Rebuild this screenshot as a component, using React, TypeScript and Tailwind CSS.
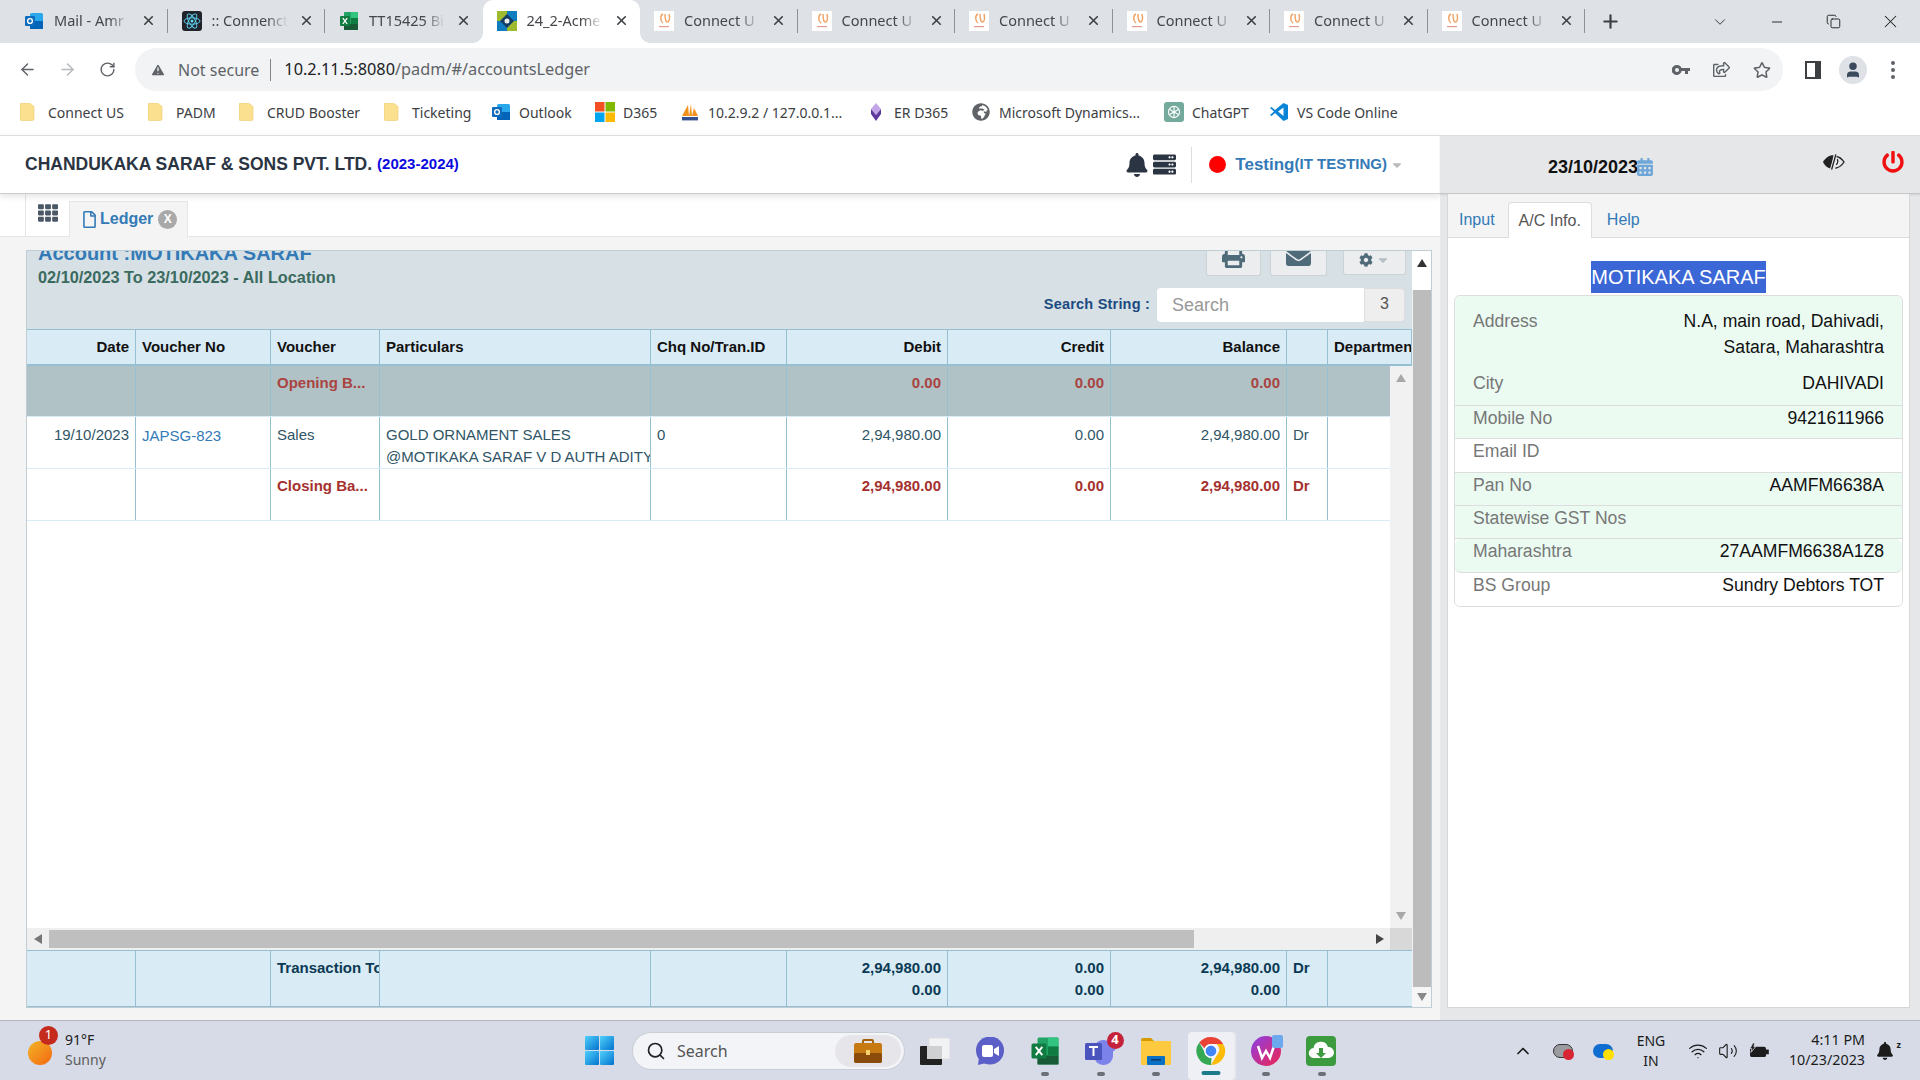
import React from 'react';
import { FaBell, FaServer, FaPrint, FaEnvelope, FaCog, FaRegFile, FaTh, FaCalendarAlt, FaPowerOff, FaCaretDown, FaGlobeAfrica, FaRegShareSquare, FaRegStar } from 'react-icons/fa';
import { ArrowLeft, ArrowRight, RotateCw, X, Plus, Minus, ChevronDown, ChevronUp, Wifi, Volume2, TriangleAlert, Copy, User, Search } from 'lucide-react';

// ===== Favicons =====

const Outlook = () => (
  <svg viewBox="0 0 20 20" className="w-5 h-5">
    <rect x="6" y="2" width="13" height="16" rx="1.5" fill="#28a8ea" />
    <rect x="6" y="10" width="13" height="8" fill="#0364b8" />
    <rect x="1" y="5" width="10" height="10" rx="1" fill="#0f6cbd" />
    <circle cx="6" cy="10" r="2.4" fill="none" stroke="#fff" strokeWidth="1.4" />
  </svg>
);

const ReactLogo = () => (
  <svg viewBox="0 0 20 20" className="w-5 h-5">
    <rect width="20" height="20" rx="3" fill="#20232a" />
    <g fill="none" stroke="#61dafb" strokeWidth="0.9">
      <ellipse cx="10" cy="10" rx="8" ry="3.2" />
      <ellipse cx="10" cy="10" rx="8" ry="3.2" transform="rotate(60 10 10)" />
      <ellipse cx="10" cy="10" rx="8" ry="3.2" transform="rotate(120 10 10)" />
    </g>
    <circle cx="10" cy="10" r="1.5" fill="#61dafb" />
  </svg>
);

const Excel = ({ size = 'w-5 h-5' }: { size?: string }) => (
  <svg viewBox="0 0 20 20" className={size}>
    <rect x="5" y="1" width="14" height="18" rx="1" fill="#21a366" />
    <rect x="12" y="1" width="7" height="6" fill="#33c481" />
    <rect x="5" y="13" width="14" height="6" fill="#185c37" />
    <rect x="12" y="7" width="7" height="6" fill="#107c41" />
    <rect x="1" y="5" width="10" height="10" rx="1" fill="#107c41" />
    <path d="M3.8 7.2l4.4 5.6M8.2 7.2l-4.4 5.6" stroke="#fff" strokeWidth="1.3" />
  </svg>
);

const Acme = () => (
  <svg viewBox="0 0 20 20" className="w-5 h-5">
    <rect width="10" height="10" fill="#9dbb2c" />
    <rect x="10" width="10" height="10" fill="#0d7cc1" />
    <rect y="10" width="10" height="10" fill="#0d7cc1" />
    <rect x="10" y="10" width="10" height="10" fill="#9dbb2c" />
    <path d="M10 3l7 7-7 7-7-7z" fill="#123c66" />
    <circle cx="10" cy="10" r="2.5" fill="#e8eef0" />
  </svg>
);

const ConnectUs = () => (
  <svg viewBox="0 0 20 20" className="w-5 h-5">
    <rect width="20" height="20" fill="#fff" />
    <path d="M9 3C6 4 6 10 9 12M11 3c0 4 .5 8 2.500 8s2.500-4 1.500-8" fill="none" stroke="#f0a060" strokeWidth="1.400" />
    <rect x="5" y="15" width="10" height="1.200" fill="#e59a8e" />
  </svg>
);

const Windows365 = () => (
  <svg viewBox="0 0 20 20" className="w-5 h-5">
    <rect width="9.5" height="9.5" fill="#f25022" />
    <rect x="10.5" width="9.5" height="9.5" fill="#7fba00" />
    <rect y="10.5" width="9.5" height="9.5" fill="#00a4ef" />
    <rect x="10.5" y="10.5" width="9.5" height="9.5" fill="#ffb900" />
  </svg>
);

const Pma = () => (
  <svg viewBox="0 0 20 20" className="w-5 h-5">
    <path d="M2 14L8 3l1 11zM9 14l2-12 1 12zM12 14l2-8 4 8z" fill="#f2921c" />
    <rect x="2" y="15" width="16" height="3.4" fill="#33508f" />
  </svg>
);

const ErD365 = () => (
  <svg viewBox="0 0 20 20" className="w-5 h-5">
    <path d="M10 1l5 6-5 6-5-6z" fill="#c3a6e8" />
    <path d="M5 7l5 6 5-6v5l-5 7-5-7z" fill="#5b3a9b" />
  </svg>
);

const ChatGpt = () => (
  <svg viewBox="0 0 20 20" className="w-5 h-5">
    <rect width="20" height="20" rx="3" fill="#74aa9c" />
    <g fill="none" stroke="#fff" strokeWidth="1.1">
      <circle cx="10" cy="10" r="5.6" />
      <path d="M10 4.4v11M5.2 7.2l9.6 5.6M14.8 7.2l-9.6 5.6" />
    </g>
  </svg>
);

const VsCode = () => (
  <svg viewBox="0 0 20 20" className="w-5 h-5">
    <path d="M14.5 1L19 3v14l-4.500 2L6 11l-3.500 3L1 13l4-3.500L1 6l1.500-1L6 8z" fill="#0a84d6" />
    <path d="M14.500 5.500L9 9.500l5.500 4.500z" fill="#fff" />
  </svg>
);

const Folder = () => (
  <svg viewBox="0 0 15 18" className="w-[15px] h-[18px]">
    <path d="M1.500 0h8L14 3.500V16a1.500 1.500 0 01-1.500 1.500h-11A1.500 1.500 0 010 16V1.500A1.500 1.500 0 011.500 0z" fill="#fbe08f" stroke="#ecc968" strokeWidth="0.600" />
  </svg>
);

const KeyIcon = () => (
  <svg viewBox="0 0 18 12" className="w-[18px] h-[12px]" fill="#5f6368">
    <path d="M5 1a5 5 0 014.600 3H18v3h-2v3h-3V7H9.600A5 5 0 115 1zm0 3a2 2 0 100 4 2 2 0 000-4z" fillRule="evenodd" />
  </svg>
);

const HalfEye = () => (
  <svg viewBox="0 0 24 18" className="w-[23px] h-[18px]">
    <path d="M1 9C4 4 8 2 12 2l-3 14C5.500 15 3 13 1 9z" fill="#222" />
    <path d="M14 3c4 .5 7 3 9 6-2 3-5 6-9 6.500" fill="none" stroke="#222" strokeWidth="1.400" />
    <path d="M16 6c1 2 .5 4-1 6" fill="none" stroke="#222" strokeWidth="1.200" />
    <path d="M15 0L9 18" stroke="#e5e7e9" strokeWidth="2.500" />
    <path d="M14.500 1L10 17" stroke="#222" strokeWidth="1.400" />
  </svg>
);

const Tri = ({ dir, cls }: { dir: 'up' | 'down' | 'left' | 'right'; cls: string }) => {
  const points = { up: '5,1 10,9 0,9', down: '0,1 10,1 5,9', left: '9,0 9,10 1,5', right: '1,0 1,10 9,5' }[dir];
  return (
    <svg viewBox="0 0 10 10" className="w-[10px] h-[10px]">
      <polygon points={points} className={cls} />
    </svg>
  );
};

// ===== Browser chrome =====

const tabs = [
  { icon: <Outlook />, title: 'Mail - Amr', sep: true },
  { icon: <ReactLogo />, title: ':: Connenct', sep: true },
  { icon: <Excel />, title: 'TT15425 Bi', sep: false },
  { icon: <Acme />, title: '24_2-Acme', active: true, sep: false },
  { icon: <ConnectUs />, title: 'Connect U', sep: true },
  { icon: <ConnectUs />, title: 'Connect U', sep: true },
  { icon: <ConnectUs />, title: 'Connect U', sep: true },
  { icon: <ConnectUs />, title: 'Connect U', sep: true },
  { icon: <ConnectUs />, title: 'Connect U', sep: true },
  { icon: <ConnectUs />, title: 'Connect U', sep: true },
];

const TabStrip = () => (
  <div className="h-[43px] bg-[#dee1e6] flex items-end pl-[10px] shrink-0">
    {tabs.map((t, i) => (
      <div key={i} className={`relative w-[157.500px] h-[43px] flex items-center pl-[14px] pb-[2px] ${t.active ? 'bg-white rounded-t-[10px]' : ''}`}>
        {t.active && <span className="absolute bottom-0 -left-[10px] w-[10px] h-[10px] bg-[radial-gradient(circle_at_0_0,transparent_9.500px,white_10px)]" />}
        {t.active && <span className="absolute bottom-0 -right-[10px] w-[10px] h-[10px] bg-[radial-gradient(circle_at_100%_0,transparent_9.500px,white_10px)]" />}
        {t.icon}
        <span className="ml-[10px] w-[76px] overflow-hidden whitespace-nowrap text-[14.500px] text-[#45474a] [mask-image:linear-gradient(to_right,black_72%,transparent)]">{t.title}</span>
        <X size={15} strokeWidth={2.6} className="ml-[11px] text-[#3c4043]" />
        {t.sep && <span className="absolute right-0 top-[9px] h-[24px] w-px bg-[#8e9195]" />}
      </div>
    ))}
    <div className="h-[43px] w-[50px] flex items-center justify-center">
      <Plus size={21} strokeWidth={2.5} className="text-[#3c4043]" />
    </div>
    <div className="flex-1 h-[43px] flex items-center justify-end text-[#222] -mt-[4px]">
      <ChevronDown size={18} strokeWidth={1.2} />
      <Minus size={16} strokeWidth={1.4} className="ml-[40px]" />
      <Copy size={15} strokeWidth={1.5} className="ml-[41px]" />
      <X size={21} strokeWidth={1.2} className="ml-[39px] mr-[19px]" />
    </div>
  </div>
);

const AddressBar = () => (
  <div className="h-[48px] bg-white flex items-start pt-[5px] shrink-0 text-[#5f6368]">
    <div className="w-[135px] h-[43px] flex items-center pl-[18px]">
      <ArrowLeft size={19} strokeWidth={1.8} />
      <ArrowRight size={19} strokeWidth={1.8} className="ml-[21px] text-[#b5b8bc]" />
      <RotateCw size={17} strokeWidth={2} className="ml-[22px]" />
    </div>
    <div className="w-[1648px] h-[43px] rounded-full bg-[#f1f3f4] flex items-center pl-[15px] pr-[12px]">
      <TriangleAlert size={16} fill="#5f6368" stroke="#f1f3f4" />
      <span className="ml-[12px] text-[16px] text-[#5f6368]">Not secure</span>
      <span className="ml-[11px] w-px h-[22px] bg-[#80868b]" />
      <span className="ml-[13px] text-[16.300px] text-[#202124]">
        10.2.11.5:8080<span className="text-[#5f6368]">/padm/#/accountsLedger</span>
      </span>
      <div className="ml-auto flex items-center">
        <KeyIcon />
        <FaRegShareSquare size={17} className="ml-[23px]" />
        <FaRegStar size={18} className="ml-[23px]" />
      </div>
    </div>
    <div className="flex-1 h-[43px] flex items-center">
      <span className="ml-[22px] w-[16px] h-[18px] border-[2px] border-r-[6px] border-[#3c4043]" />
      <span className="ml-[18px] w-[28px] h-[28px] rounded-full bg-[#dee1e6] flex items-center justify-center overflow-hidden">
        <User size={18} fill="#3c4a5e" stroke="#3c4a5e" />
      </span>
      <span className="ml-[24px] flex flex-col gap-[3px]">
        <i className="w-[4px] h-[4px] rounded-full bg-[#5f6368]" />
        <i className="w-[4px] h-[4px] rounded-full bg-[#5f6368]" />
        <i className="w-[4px] h-[4px] rounded-full bg-[#5f6368]" />
      </span>
    </div>
  </div>
);

const bookmarks = [
  { icon: <Folder />, label: 'Connect US', cls: 'w-[128px]' },
  { icon: <Folder />, label: 'PADM', cls: 'w-[91px]' },
  { icon: <Folder />, label: 'CRUD Booster', cls: 'w-[145px]' },
  { icon: <Folder />, label: 'Ticketing', cls: 'w-[107px]' },
  { icon: <Outlook />, label: 'Outlook', cls: 'w-[104px]' },
  { icon: <Windows365 />, label: 'D365', cls: 'w-[85px]' },
  { icon: <Pma />, label: '10.2.9.2 / 127.0.0.1...', cls: 'w-[186px]' },
  { icon: <ErD365 />, label: 'ER D365', cls: 'w-[105px]' },
  { icon: <FaGlobeAfrica size={18} className="text-[#5f6368] ml-[1px]" />, label: 'Microsoft Dynamics...', cls: 'w-[193px]' },
  { icon: <ChatGpt />, label: 'ChatGPT', cls: 'w-[105px]' },
  { icon: <VsCode />, label: 'VS Code Online', cls: 'w-[140px]' },
];

const BookmarksBar = () => (
  <div className="h-[44px] bg-white flex items-center pl-[20px] pb-[2px] shrink-0">
    {bookmarks.map((b) => (
      <div key={b.label} className={`${b.cls} flex items-center shrink-0`}>
        <span className="w-[28px] flex items-center">{b.icon}</span>
        <span className="text-[14px] text-[#3c4043] whitespace-nowrap">{b.label}</span>
      </div>
    ))}
  </div>
);

// ===== Ledger =====

const gridCols = 'grid grid-cols-[109px_135px_109px_271px_136px_161px_163px_176px_41px_84px]';
const cell = 'border-r border-[#96c0d2] px-[6px] overflow-hidden whitespace-nowrap';

type Row = { date?: string; no?: string; voucher?: string; part?: string[]; chq?: string; debit?: string; credit?: string; balance?: string; dr?: string };

const LedgerRow = ({ row, cls, text, pad = 'pt-[6px]', link = 'pt-[7px]' }: { row: Row; cls: string; text: string; pad?: string; link?: string }) => (
  <div className={`${gridCols} ${cls} leading-[22px] text-[15px] ${text}`}>
    <div className={`${cell} text-right ${pad}`}>{row.date}</div>
    <div className={`${cell} ${link} text-[#337ab7]`}>{row.no}</div>
    <div className={`${cell} ${pad}`}>{row.voucher}</div>
    <div className={`${cell} ${pad}`}>
      {row.part?.map((p) => <div key={p}>{p}</div>)}
    </div>
    <div className={`${cell} ${pad}`}>{row.chq}</div>
    <div className={`${cell} text-right ${pad}`}>{row.debit}</div>
    <div className={`${cell} text-right ${pad}`}>{row.credit}</div>
    <div className={`${cell} text-right ${pad}`}>{row.balance}</div>
    <div className={`${cell} ${pad}`}>{row.dr}</div>
    <div className={`${cell} border-r-0`} />
  </div>
);

const Head = ({ children, right }: { children?: React.ReactNode; right?: boolean }) => (
  <div className={`${cell} ${right ? 'text-right' : ''} leading-[34px]`}>{children}</div>
);

const LedgerPanel = () => (
  <div className="h-[758px] w-[1406px] flex border-t border-l border-r border-b border-[#bfcdd4] bg-white">
    <div className="w-[1385px] flex flex-col min-w-0">
      {/* Title bar, scrolled a little so its top is cut */}
      <div className="h-[78px] bg-[#d6e0e5] overflow-hidden flex justify-between shrink-0 pl-[11px] pr-[6px]">
        <div className="-mt-[10px]">
          <div className="text-[20px] font-bold leading-[24px] text-[#337ab7]">Account :MOTIKAKA SARAF</div>
          <div className="text-[16.300px] font-bold leading-[20px] mt-[2px] text-[#3b6b5f]">02/10/2023 To 23/10/2023 - All Location</div>
        </div>
        <div className="flex flex-col items-end">
          <div className="flex items-start text-[#4f6b7a]">
            <div className="h-[25px] w-[55px] -mr-px bg-[#ebedee] border border-t-0 border-[#ccd3d6] rounded-b-[3px] flex items-end justify-center overflow-hidden pb-[7px]">
              <FaPrint size={23} className="shrink-0" />
            </div>
            <div className="h-[25px] w-[57px] ml-[10px] bg-[#ebedee] border border-t-0 border-[#ccd3d6] rounded-b-[3px] flex items-end justify-center overflow-hidden pb-[6px]">
              <FaEnvelope size={25} className="shrink-0" />
            </div>
            <div className="h-[24px] w-[63px] ml-[16px] bg-[#ebedee] border border-t-0 border-[#ccd3d6] rounded-b-[3px] flex items-center justify-center pb-[6px]">
              <FaCog size={14} />
              <FaCaretDown size={14} className="ml-[3px] text-[#b5bfc5]" />
            </div>
          </div>
          <div className="flex items-center mt-[12px] mr-[1px]">
            <span className="text-[14.500px] font-bold text-[#1b4a80] tracking-[0.2px] mr-[7px]">Search String :</span>
            <div className="w-[207px] h-[34px] bg-white rounded-l-[4px] flex items-center pl-[15px] text-[18px] text-[#999]">Search</div>
            <div className="w-[41px] h-[34px] bg-[#eee] border border-[#ddd] rounded-r-[4px] flex items-center justify-center text-[16px] text-[#555] pb-[3px]">3</div>
          </div>
        </div>
      </div>

      <div className={`${gridCols} h-[37px] shrink-0 bg-[#d9ebf4] border-t border-[#96c0d2] border-b-[2px] text-[15px] font-bold text-[#111]`}>
        <Head right>Date</Head>
        <Head>Voucher No</Head>
        <Head>Voucher</Head>
        <Head>Particulars</Head>
        <Head>Chq No/Tran.ID</Head>
        <Head right>Debit</Head>
        <Head right>Credit</Head>
        <Head right>Balance</Head>
        <Head />
        <Head>Department</Head>
      </div>

      <div className="flex-1 flex min-h-0">
        <div className="w-[1363px] overflow-hidden">
          <div className="w-[1385px]">
            <LedgerRow
              cls="h-[51px] bg-[#b0c2c5] border-b-[1px] border-[#d9ebf4]"
              text="font-bold text-[#a94442]"
              row={{ voucher: 'Opening B...', debit: '0.00', credit: '0.00', balance: '0.00' }}
            />
            <LedgerRow
              cls="h-[52px] border-b border-[#d9ebf4]"
              text="text-[#2f5566]"
              pad="pt-[7px]"
              link="pt-[8px]"
              row={{ date: '19/10/2023', no: 'JAPSG-823', voucher: 'Sales', part: ['GOLD ORNAMENT SALES', '@MOTIKAKA SARAF V D AUTH ADITYA'], chq: '0', debit: '2,94,980.00', credit: '0.00', balance: '2,94,980.00', dr: 'Dr' }}
            />
            <LedgerRow
              cls="h-[52px] border-b border-[#d9ebf4]"
              text="font-bold text-[#a5312f]"
              row={{ voucher: 'Closing Ba...', debit: '2,94,980.00', credit: '0.00', balance: '2,94,980.00', dr: 'Dr' }}
            />
          </div>
        </div>
        <div className="w-[22px] bg-[#f1f1f1] flex flex-col items-center justify-between py-[7px] pr-px">
          <Tri dir="up" cls="fill-[#a8a8a8]" />
          <Tri dir="down" cls="fill-[#a8a8a8]" />
        </div>
      </div>

      <div className="h-[22px] shrink-0 flex items-center bg-[#efefef]">
        <div className="w-[22px] flex justify-center"><Tri dir="left" cls="fill-[#777]" /></div>
        <div className="w-[1145px] h-[18px] bg-[#bfbfbf]" />
        <div className="flex-1 flex justify-end pr-[5px]"><Tri dir="right" cls="fill-[#444]" /></div>
        <div className="w-[22px] h-[22px] bg-[#d8d8d8]" />
      </div>

      <div className={`${gridCols} flex-none h-[57px] bg-[#d9ebf4] border-t border-b border-[#96c0d2] text-[15px] font-bold text-[#0b3a55] leading-[22px]`}>
        <div className={cell} />
        <div className={cell} />
        <div className={`${cell} pt-[6px]`}>Transaction Total</div>
        <div className={cell} />
        <div className={cell} />
        <div className={`${cell} text-right pt-[6px]`}>2,94,980.00<br />0.00</div>
        <div className={`${cell} text-right pt-[6px]`}>0.00<br />0.00</div>
        <div className={`${cell} text-right pt-[6px]`}>2,94,980.00<br />0.00</div>
        <div className={`${cell} pt-[6px]`}>Dr</div>
        <div className={`${cell} border-r-0`} />
      </div>
    </div>

    {/* Page scrollbar */}
    <div className="flex-1 bg-[#f1f1f1] flex flex-col items-center">
      <div className="h-[39px] w-full flex justify-center pt-[7px] bg-white"><Tri dir="up" cls="fill-[#333]" /></div>
      <div className="w-[18px] flex-1 bg-[#bcbcbc]" />
      <div className="h-[20px] w-full flex justify-center items-center bg-[#f6f6f6]"><Tri dir="down" cls="fill-[#888]" /></div>
    </div>
  </div>
);

const LeftPane = () => (
  <div className="w-[1440px] flex flex-col shrink-0">
    <div className="h-[59px] bg-white border-t border-[#ddd] border-b border-b-[#ccc] shadow-[0_3px_6px_rgba(0,0,0,0.1)] z-10 flex items-center pl-[25px] shrink-0">
      <span className="text-[17.500px] font-bold text-[#2b3442]">CHANDUKAKA SARAF &amp; SONS PVT. LTD.</span>
      <span className="ml-[5px] text-[15px] font-bold text-[#0b0be0]">(2023-2024)</span>
      <div className="ml-auto flex items-center pr-[36px]">
        <FaBell size={24} className="text-[#2b3442]" />
        <FaServer size={23} className="text-[#2b3442] ml-[4px]" />
        <span className="w-px h-[36px] bg-[#ddd] ml-[15px]" />
        <span className="w-[17px] h-[17px] rounded-full bg-[#f00] ml-[17px]" />
        <span className="ml-[9px] text-[17px] font-bold text-[#337ab7]">Testing</span>
        <span className="text-[15px] font-bold text-[#337ab7]">(IT TESTING)</span>
        <FaCaretDown size={14} className="text-[#bbb] ml-[3px]" />
      </div>
    </div>
    <div className="h-[43px] bg-white border-b border-[#e5e5e5] flex pl-[25px] pt-[7px] shrink-0">
      <div className="w-[44px] border-l border-[#e5e5e5] flex justify-center pt-[2px] text-[#4a5764] -mt-[7px] h-[43px] items-start">
        <span className="mt-[7px]"><FaTh size={20} /></span>
      </div>
      <div className="w-[119px] h-[36px] bg-[#f4f4f4] border border-b-0 border-[#e5e5e5] flex items-center pl-[11px] pb-[1px]">
        <FaRegFile size={17} className="text-[#337ab7]" />
        <span className="ml-[2px] text-[16px] font-bold text-[#337ab7]">Ledger</span>
        <span className="ml-[5px] w-[19px] h-[19px] rounded-full bg-[#a9a9a9] text-white text-[12px] font-bold flex items-center justify-center">X</span>
      </div>
    </div>
    <div className="flex-1 bg-[#f4f4f4] pt-[13px] pl-[26px] min-h-0">
      <LedgerPanel />
    </div>
  </div>
);

// ===== Right pane =====

const infoRows = [
  { label: 'Mobile No', value: '9421611966', cls: 'bg-[#ebfbf2]' },
  { label: 'Email ID', value: '', cls: 'bg-white' },
  { label: 'Pan No', value: 'AAMFM6638A', cls: 'bg-[#ebfbf2]' },
  { label: 'Statewise GST Nos', value: '', cls: 'bg-[#ebfbf2]' },
  { label: 'Maharashtra', value: '27AAMFM6638A1Z8', cls: 'bg-[#ebfbf2] rounded-[6px]' },
  { label: 'BS Group', value: 'Sundry Debtors TOT', cls: 'bg-white rounded-b-[6px]' },
];

const RightPane = () => (
  <div className="flex-1 flex flex-col bg-[#e5e7e9] min-w-0 z-20">
    <div className="h-[59px] shrink-0 border-t border-[#ddd] border-b border-b-[#c4c6c8] flex items-center shadow-[0_1px_2px_rgba(0,0,0,0.1)]">
      <span className="ml-[108px] text-[18px] font-bold text-[#111] mt-[6px]">23/10/2023</span>
      <FaCalendarAlt size={18} className="text-[#6ea6d8] mt-[5px] -ml-[2px]" />
      <span className="ml-[168px] -mt-[6px]"><HalfEye /></span>
      <FaPowerOff size={22} className="text-[#f01010] ml-[37px] -mt-[6px]" />
    </div>
    <div className="flex-1 min-h-0 ml-[7px] mr-[10px] mb-[12px] bg-white border-l border-r border-b border-[#d4d6d8] flex flex-col">
      <div className="h-[44px] bg-[#f4f4f4] border-b border-[#ddd] flex items-end pl-[11px] text-[16px] text-[#337ab7] shrink-0">
        <span className="h-[35px] leading-[36px]">Input</span>
        <span className="h-[36px] leading-[36px] -mb-px ml-[13px] px-[10px] bg-white border border-b-0 border-[#ddd] rounded-t-[4px] text-[#555]">A/C Info.</span>
        <span className="h-[35px] leading-[36px] ml-[15px]">Help</span>
      </div>
      <div className="flex justify-center mt-[23px]">
        <span className="bg-[#3a66d6] text-white text-[20px] leading-[32px] inline-block">MOTIKAKA SARAF</span>
      </div>
      <div className="mx-[6px] mt-[2px] border border-[#ddd] rounded-[6px] text-[17.600px] leading-[25.700px]">
        <div className="bg-[#ebfbf2] rounded-t-[6px] border-b border-[#ddd] pt-[13px] pb-[8px] pl-[18px] pr-[18px]">
          <div className="flex justify-between">
            <span className="text-[#777]">Address</span>
            <span className="text-right text-[#111]">N.A, main road, Dahivadi,<br />Satara, Maharashtra</span>
          </div>
          <div className="flex justify-between mt-[11px]">
            <span className="text-[#777]">City</span>
            <span className="text-[#111]">DAHIVADI</span>
          </div>
        </div>
        {infoRows.map((r, i) => (
          <div key={r.label} className={`${r.cls} ${i < infoRows.length - 1 ? 'border-b border-[#ddd]' : ''} h-[33.300px] flex justify-between pl-[18px] pr-[18px]`}>
            <span className="text-[#777]">{r.label}</span>
            <span className="text-[#111]">{r.value}</span>
          </div>
        ))}
      </div>
    </div>
  </div>
);

// ===== Taskbar =====

const Dot = ({ cls }: { cls: string }) => <span className={`absolute left-1/2 -translate-x-1/2 h-[4px] rounded-full ${cls}`} />;

const Slot = ({ children, dot }: { children: React.ReactNode; dot?: boolean }) => (
  <div className="w-[55.300px] h-[30px] flex justify-center">
    <div className="relative flex items-center justify-center">
      {children}
      {dot && <Dot cls="w-[8px] bg-[#6b7078] bottom-[-10px]" />}
    </div>
  </div>
);

const Taskbar = () => (
  <div className="h-[60px] shrink-0 bg-[#d6dbe7] border-t border-[#b4b7bd] flex items-center pl-[28px] pr-[20px]">
    <div className="w-[557px] flex items-center relative">
      <span className="w-[24px] h-[24px] rounded-full bg-gradient-to-br from-[#f0b428] to-[#f2650f] mt-[4px]" />
      <span className="absolute left-[11px] top-[-6px] w-[19px] h-[19px] rounded-full bg-[#c42b1c] text-white text-[13px] flex items-center justify-center">1</span>
      <div className="ml-[13px] text-[14px] leading-[20px] -mt-[2px]">
        <div className="text-[#202020]">91°F</div>
        <div className="text-[#5d5d5d]">Sunny</div>
      </div>
    </div>
    <svg viewBox="0 0 29 29" className="w-[29px] h-[29px]">
      <defs>
        <linearGradient id="w" x1="0" y1="0" x2="1" y2="1">
          <stop offset="0" stopColor="#4fd0fb" />
          <stop offset="1" stopColor="#0473ce" />
        </linearGradient>
      </defs>
      <rect width="14" height="14" rx="1" fill="url(#w)" />
      <rect x="15" width="14" height="14" rx="1" fill="url(#w)" />
      <rect y="15" width="14" height="14" rx="1" fill="url(#w)" />
      <rect x="15" y="15" width="14" height="14" rx="1" fill="url(#w)" />
    </svg>
    <div className="ml-[18px] w-[273px] h-[38px] rounded-full bg-[#f3f4f8] border border-[#c8ccd4] flex items-center pl-[13px] pr-[3px]">
      <Search size={20} strokeWidth={2} className="text-[#222]" />
      <span className="ml-[11px] text-[16px] text-[#555]">Search</span>
      <div className="ml-auto w-[66px] h-[32px] rounded-full bg-[#e6e6ea] flex items-center justify-center">
        <svg viewBox="0 0 28 24" className="w-[28px] h-[24px]">
          <rect x="9" y="1" width="10" height="5" rx="1" fill="none" stroke="#a85f0a" strokeWidth="2" />
          <rect y="4" width="28" height="20" rx="2" fill="#c77a12" />
          <rect y="14" width="28" height="10" rx="2" fill="#8a4c0a" />
          <rect x="12" y="11" width="4" height="5" fill="#f5d36a" />
        </svg>
      </div>
    </div>
    <div className="ml-[2px]" />
    <Slot>
      <svg viewBox="0 0 30 28" className="w-[30px] h-[28px]">
        <rect x="9" y="1" width="21" height="21" fill="#f1f2f4" stroke="#dcdde0" />
        <rect y="9" width="22" height="19" rx="1" fill="#222" />
        <rect x="7" y="9" width="15" height="13" fill="#cfd0d2" />
      </svg>
    </Slot>
    <Slot>
      <svg viewBox="0 0 28 28" className="w-[28px] h-[28px]">
        <ellipse cx="14" cy="13.500" rx="14" ry="14" fill="#5b5fc7" />
        <path d="M3 20l-1 8 8-2z" fill="#5b5fc7" />
        <rect x="6" y="8" width="11" height="12" rx="2" fill="#fff" />
        <path d="M18 12l5-3v10l-5-3z" fill="#fff" />
      </svg>
    </Slot>
    <Slot dot>
      <Excel size="w-[30px] h-[30px]" />
    </Slot>
    <Slot dot>
      <div className="relative">
        <svg viewBox="0 0 32 28" className="w-[32px] h-[28px]">
          <circle cx="26" cy="10" r="5" fill="#7b83eb" />
          <rect x="9" y="3" width="19" height="25" rx="9" fill="#7b83eb" />
          <rect y="6" width="17" height="17" rx="1.500" fill="#4b53bc" />
          <path d="M4 10h9M8.500 10v9" stroke="#fff" strokeWidth="2" />
        </svg>
        <span className="absolute -top-[5px] -right-[7px] w-[17px] h-[17px] rounded-full bg-[#c4213a] text-white text-[13px] font-bold flex items-center justify-center">4</span>
      </div>
    </Slot>
    <Slot dot>
      <svg viewBox="0 0 30 28" className="w-[30px] h-[28px]">
        <path d="M0 3a2 2 0 012-2h8l3 3h-13z" fill="#d99a00" />
        <rect y="4" width="30" height="24" rx="1" fill="#fcc93f" />
        <rect x="6" y="19" width="18" height="9" rx="1" fill="#0a70c4" />
        <rect x="10" y="22" width="10" height="1.500" fill="#063a70" />
      </svg>
    </Slot>
    <Slot>
      <div className="relative">
        <div className="absolute -inset-x-[8px] -top-[4px] -bottom-[14px] rounded-[4px] bg-[#eef0f5] shadow-[2px_0_0_#e6e8ee]" />
        <svg viewBox="0 0 32 32" className="relative w-[30px] h-[30px]">
          <path d="M16 1a15 15 0 0113 7.500H16a7.500 7.500 0 00-7 4.500L3.500 7A15 15 0 0116 1z" fill="#ea4335" />
          <path d="M29 8.500A15 15 0 0116 31l6.500-11a7.500 7.500 0 00-.500-11.500z" fill="#fbbc05" />
          <path d="M16 31A15 15 0 013.500 7L9.500 17.500a7.500 7.500 0 007 6z" fill="#34a853" />
          <circle cx="16" cy="16" r="6.500" fill="#4285f4" stroke="#fff" strokeWidth="1.500" />
        </svg>
        <Dot cls="w-[19px] bg-[#1b7a8c] bottom-[-9px]" />
      </div>
    </Slot>
    <Slot dot>
      <div className="relative">
        <svg viewBox="0 0 30 30" className="w-[30px] h-[30px]">
          <defs>
            <linearGradient id="v" x1="0" y1="0" x2="1" y2="1">
              <stop offset="0" stopColor="#8a3fe8" />
              <stop offset="1" stopColor="#f0244f" />
            </linearGradient>
          </defs>
          <ellipse cx="15" cy="15" rx="15" ry="15" fill="url(#v)" />
          <path d="M7 10l4 12 4-7 4 7 4-12" fill="none" stroke="#fff" strokeWidth="2.500" />
        </svg>
        <span className="absolute -top-[1px] -right-[2px] w-[11px] h-[13px] rounded-[2px] bg-[#6ba8ee]" />
      </div>
    </Slot>
    <Slot dot>
      <svg viewBox="0 0 30 30" className="w-[30px] h-[30px] -ml-[2px]">
        <rect width="30" height="30" rx="4" fill="#3c9a3f" />
        <path d="M8 22a5 5 0 01-.500-10 7.500 7.500 0 0114.500-1 5.500 5.500 0 011 11z" fill="#fff" />
        <path d="M13 12h4v5h3l-5 5-5-5h3z" fill="#3c9a3f" />
      </svg>
    </Slot>
    <div className="ml-auto flex items-center text-[#1c1c1c]">
      <div className="w-[30px] flex justify-center"><ChevronUp size={20} strokeWidth={2} /></div>
      <div className="w-[40px] ml-[5px] flex justify-center relative">
        <span className="w-[20px] h-[14px] rounded-full bg-[#9b9ca1] border border-[#333]" />
        <span className="absolute left-[20px] top-[5px] w-[11px] h-[11px] rounded-full bg-[#d92433]" />
      </div>
      <div className="w-[40px] flex justify-center relative">
        <span className="w-[20px] h-[14px] rounded-full bg-[#0f6cd0]" />
        <span className="absolute left-[20px] top-[5px] w-[11px] h-[11px] rounded-full bg-[#ffdf00]" />
      </div>
      <div className="w-[56px] text-center text-[14px] leading-[20px]">ENG<br />IN</div>
      <div className="w-[30px] ml-[4px] flex justify-center"><Wifi size={20} strokeWidth={1.500} /></div>
      <div className="w-[30px] flex justify-center"><Volume2 size={20} strokeWidth={1.300} /></div>
      <div className="w-[30px] flex justify-center">
        <svg viewBox="0 0 22 16" className="w-[21px] h-[15px]" fill="#1c1c1c">
          <rect x="2" y="4" width="17" height="11" rx="2" />
          <rect x="19" y="7" width="3" height="5" />
          <path d="M5 0L2 6h2L3 10l5-6H6l1-4z" stroke="#d6dbe7" strokeWidth="0.800" />
        </svg>
      </div>
      <div className="w-[92px] text-right text-[14.300px] leading-[20px] -mt-[2px]">4:11 PM<br />10/23/2023</div>
      <div className="w-[35px] flex justify-center relative">
        <FaBell size={18} className="ml-[5px]" />
        <span className="absolute -right-[1px] -top-[4px] text-[9px] font-bold">z</span>
      </div>
    </div>
  </div>
);

export default function App() {
  return (
    <div className="h-screen w-[1920px] flex flex-col overflow-hidden bg-white font-['Liberation_Sans',Arial,sans-serif]">
      <div className="font-['Noto_Sans',sans-serif] flex flex-col shrink-0">
        <TabStrip />
        <AddressBar />
        <BookmarksBar />
      </div>
      <div className="flex-1 min-h-0 flex">
        <LeftPane />
        <RightPane />
      </div>
      <div className="font-['Noto_Sans',sans-serif]">
        <Taskbar />
      </div>
    </div>
  );
}
